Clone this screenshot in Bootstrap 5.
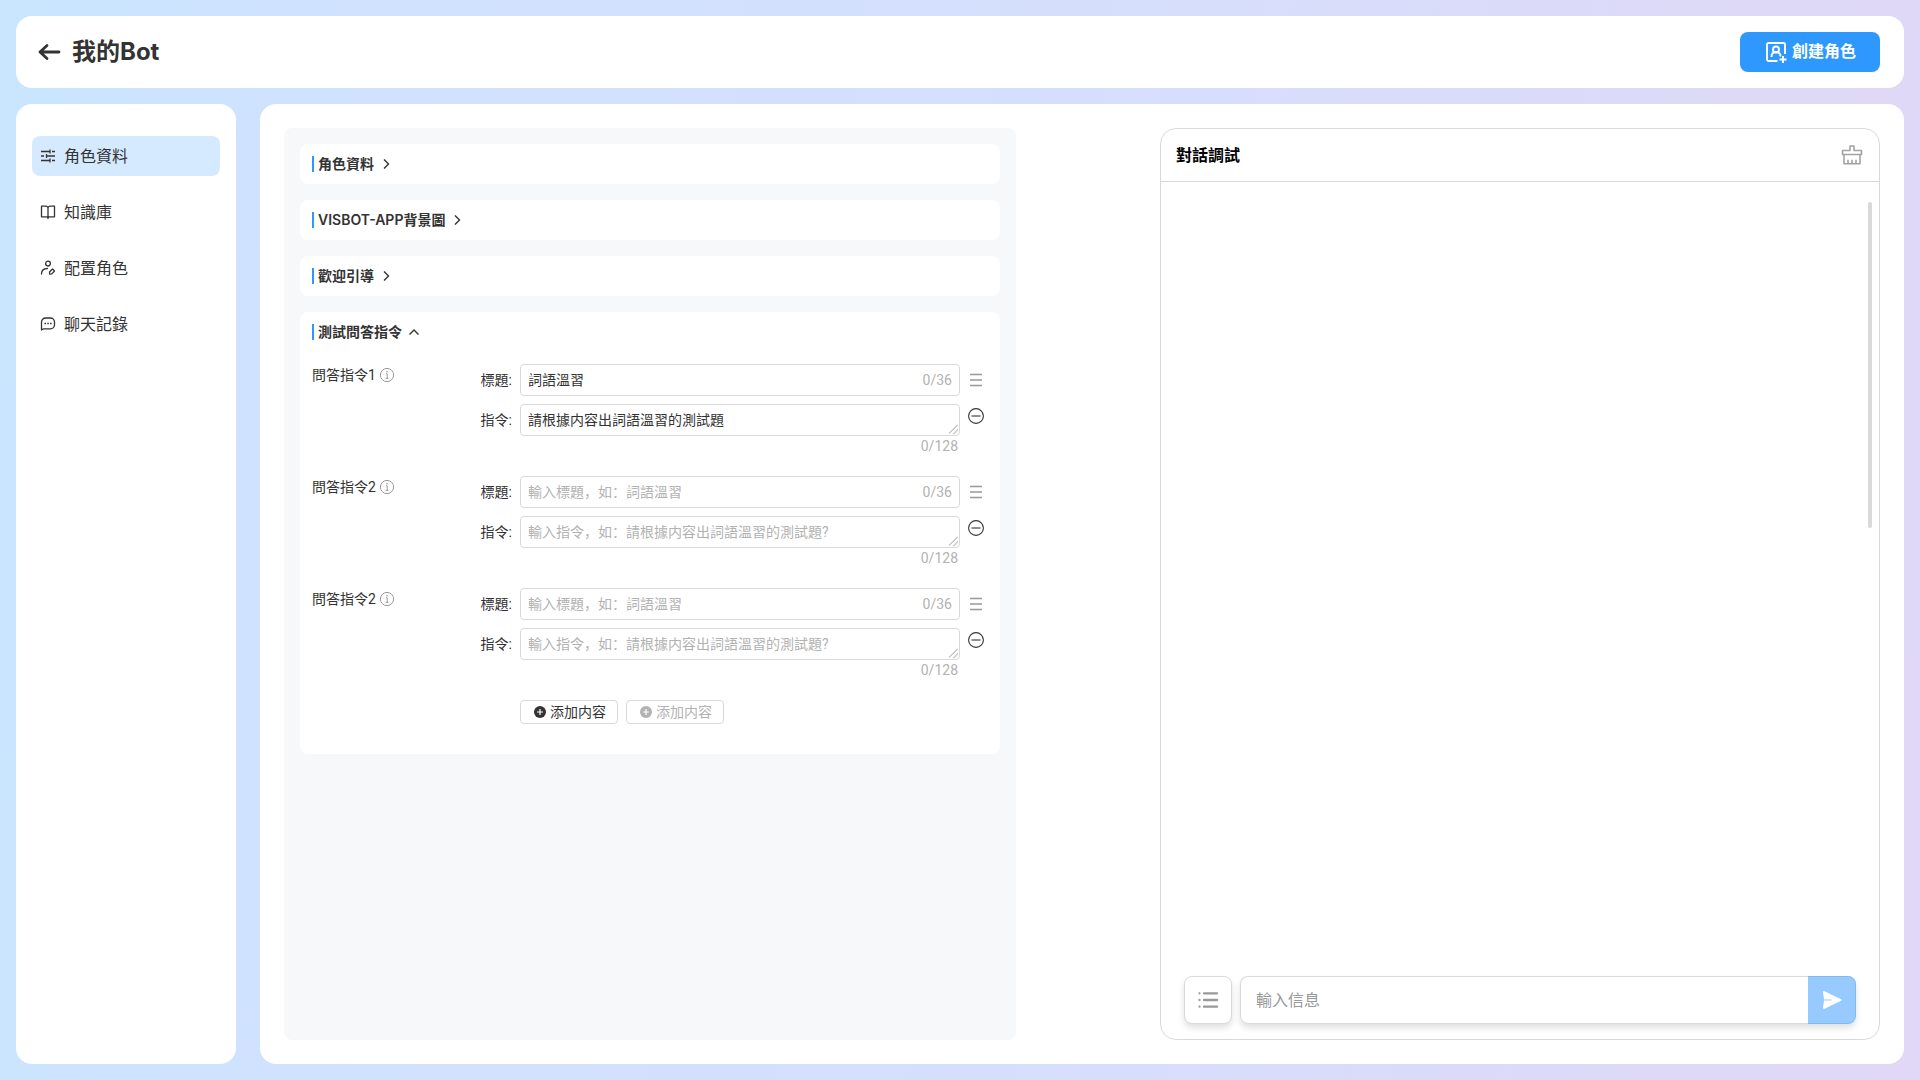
<!DOCTYPE html>
<html lang="zh-Hans">
<head>
<meta charset="utf-8">
<meta name="viewport" content="width=device-width, initial-scale=1">
<title>我的Bot</title>
<link href="https://cdn.jsdelivr.net/npm/bootstrap@5.3.0/dist/css/bootstrap.min.css" rel="stylesheet">
<style>
  :root { --ink: #333; --muted: #b2b2b2; --line: #d9d9d9; --blue: #2e98ff; }
  body { font-family: Roboto, "Noto Sans CJK SC", sans-serif; font-size: 14px; line-height: 20px; color: var(--ink);
    background: linear-gradient(95deg, #c9e6ff 0%, #cfe2ff 15%, #d5dffc 54%, #dddaf8 84%, #e0d8f6 100%); }
  svg { flex: none; display: block; }
  .heading-face { font-family: Inter, "Noto Sans CJK SC", sans-serif; font-weight: 700; }
  .shell { min-height: 100vh; }
  .panel { background: #fff; border-radius: 16px; }
  .topbar { height: 72px; padding: 0 24px 0 20px; }
  .topbar h1 { font-size: 24px; line-height: 32px; }
  .create-btn { height: 40px; width: 140px; border-radius: 8px; background: var(--blue); color: #fff; font-size: 16px; font-weight: 700; }
  .side { width: 220px; padding: 32px 16px; gap: 16px; }
  .side-link { height: 40px; padding: 0 8px; gap: 8px; border-radius: 8px; color: var(--ink); font-size: 16px; line-height: 24px; text-decoration: none; }
  .side-link span { padding-top: 1px; }
  .side-link.active { background: #d5eaff; }
  .workspace { padding: 24px; gap: 144px; }
  .editor { flex: 1 1 732px; background: #f7f8fa; border-radius: 8px; padding: 16px; gap: 16px; }
  .section-box { background: #fff; border-radius: 8px; padding: 0 12px; }
  .section-toggle { height: 40px; gap: 4px; color: var(--ink); }
  .section-toggle h2 { font-size: 14px; line-height: 16px; font-weight: 600; border-left: 2px solid var(--blue); padding-left: 4px; }
  .qa-list { padding: 12px 4px 0 0; gap: 20px; }
  .qa-name { width: 168px; flex: none; gap: 3px; padding-top: 1px; }
  .qa-grid { gap: 8px; }
  .field-row { gap: 8px; }
  .field-tag { width: 32px; text-align: right; white-space: nowrap; }
  .field { border: 1px solid var(--line); border-radius: 4px; background: #fff; height: 32px; padding: 5px 7px; font-size: 14px; line-height: 20px; color: var(--ink); }
  .field:focus, .field:focus-within, .msg-box:focus { border-color: var(--blue); box-shadow: none; }
  .field input { border: 0; outline: 0; padding: 0; background: none; color: inherit; line-height: 20px; min-width: 0; }
  .field::placeholder, .field input::placeholder { color: var(--muted); opacity: 1; }
  textarea.field { resize: vertical; min-height: 32px; overflow: hidden; display: block; }
  textarea.field::-webkit-resizer { background: linear-gradient(135deg, transparent 44%, #ccc 44% 53%, transparent 53% 70%, #ccc 70% 79%, transparent 79%) right 1px bottom 1px / 9px 9px no-repeat; }
  .counter { color: var(--muted); }
  .total { padding: 0 26px 0 0; text-align: right; }
  .icon-btn { border: 0; background: none; padding: 0; width: 16px; display: flex; justify-content: center; }
  .add-row { padding: 20px 0 30px 208px; gap: 8px; }
  .add-btn { height: 24px; width: 98px; padding: 0 0 0 2px; gap: 4px; border: 1px solid var(--line); border-radius: 4px; background: #fff; color: var(--ink); font-size: 14px; }
  .add-btn:disabled { color: var(--muted); }
  .chat { flex: 1 1 720px; border: 1px solid var(--line); border-radius: 16px; }
  .chat-head { height: 53px; padding: 0 15px; border-bottom: 1px solid var(--line); color: #000; }
  .chat-head h2 { font-size: 16px; line-height: 24px; font-weight: 700; padding-top: 1px; }
  .chat-log { padding: 20px 7px; }
  .scroll-thumb { width: 4px; height: 326px; border-radius: 2px; background: #d9d9d9; }
  .composer { padding: 0 23px 15px; gap: 8px; }
  .tool-btn { width: 48px; height: 48px; border: 1px solid var(--line); border-radius: 8px; background: #fff; box-shadow: 0 4px 6px rgba(0,0,0,.12); }
  .msg-group { border-radius: 8px; box-shadow: 0 4px 6px rgba(0,0,0,.12); }
  .msg-box { height: 48px; border: 1px solid var(--line); border-right: 0; border-radius: 8px 0 0 8px; padding: 0 15px; font-size: 16px; }
  .msg-box::placeholder { color: #999; opacity: 1; }
  .send-btn { width: 48px; height: 48px; border: 1px solid #80bbf0; border-left: 0; border-radius: 0 8px 8px 0; background: #97cbff; }
</style>
</head>
<body>
<svg width="0" height="0" class="position-absolute" aria-hidden="true">
  <symbol id="i-right" viewBox="0 0 16 16"><path d="M6 3.500 10.500 8 6 12.500" fill="none" stroke="currentColor" stroke-width="1.400"/></symbol>
  <symbol id="i-up" viewBox="0 0 16 16"><path d="M3.500 10.500 8 6l4.500 4.500" fill="none" stroke="currentColor" stroke-width="1.400"/></symbol>
  <symbol id="i-info" viewBox="0 0 16 16"><g fill="none" stroke="#999"><circle cx="8" cy="8" r="6.600"/><path d="M7 6.800h1.200V11.500M6.800 11.500h2.600"/></g><circle cx="8" cy="4.800" r=".8" fill="#999"/></symbol>
  <symbol id="i-drag" viewBox="0 0 16 16"><path d="M2 2.500h12M2 8h12M2 13.500h12" stroke="#999" stroke-width="1.300"/></symbol>
  <symbol id="i-minus" viewBox="0 0 16 16"><g fill="none" stroke="#333" stroke-width="1.100"><circle cx="8" cy="8" r="7.400"/><path d="M3.500 8h9"/></g></symbol>
  <symbol id="i-plus" viewBox="0 0 12 12"><circle cx="6" cy="6" r="6" fill="currentColor"/><path d="M6 3v6M3 6h6" stroke="#fff" stroke-width="1.200"/></symbol>
</svg>

<div class="shell d-flex flex-column p-3 gap-3">
  <header class="panel topbar d-flex align-items-center justify-content-between">
    <div class="d-flex align-items-center gap-2">
      <a href="#" aria-label="返回"><svg width="28" height="24" viewBox="0 0 28 24" fill="none" stroke="#333" stroke-width="2.800" stroke-linecap="round" stroke-linejoin="round"><path d="M23 12H4M11 5.500 4 12l7 6.500"/></svg></a>
      <h1 class="heading-face m-0">我的Bot</h1>
    </div>
    <button type="button" class="btn create-btn d-flex align-items-center justify-content-center p-0 gap-1">
      <svg width="24" height="24" viewBox="0 0 24 24" fill="none" stroke="#fff" stroke-width="1.900"><path d="M13.500 21H4.500A1.500 1.500 0 0 1 3 19.500v-15A1.500 1.500 0 0 1 4.500 3h15A1.500 1.500 0 0 1 21 4.500V14M19 16v7M15.500 19.500h7"/><circle cx="12" cy="9.500" r="3"/><path d="M7.500 17c0-3 1.600-5 4.500-5s4.500 2 4.500 4.500"/></svg>
      創建角色
    </button>
  </header>

  <div class="d-flex flex-grow-1 gap-4">
    <nav class="panel side d-flex flex-column flex-shrink-0" aria-label="主選單">
      <a href="#" class="side-link active d-flex align-items-center" aria-current="page">
        <svg width="16" height="16" viewBox="0 0 16 16" stroke="#333" stroke-width="1.300" fill="none"><path d="M1 3.500h8.500M12 3.500h3M10 1.500v4M1 8h3M6.500 8H15M6.500 6v4M1 12.500h8.500M12 12.500h3M10 10.500v4"/></svg><span>角色資料</span></a>
      <a href="#" class="side-link d-flex align-items-center">
        <svg width="16" height="16" viewBox="0 0 16 16" stroke="#333" stroke-width="1.300" fill="none" stroke-linejoin="round"><path d="M8 3.800C7.500 2.700 7 2.200 6 2.200H1.500v10.600H6.500c.8 0 1.500.3 1.500 1.700 0-1.400.7-1.700 1.500-1.700h5V2.200H10C9 2.200 8.500 2.700 8 3.800V14"/></svg><span>知識庫</span></a>
      <a href="#" class="side-link d-flex align-items-center">
        <svg width="16" height="16" viewBox="0 0 16 16" stroke="#333" stroke-width="1.300" fill="none" stroke-linecap="round" stroke-linejoin="round"><circle cx="8" cy="3.600" r="2.400"/><path d="M1.500 14c0-3.500 2.500-5.500 6-5.500M9.700 14.200l-.2-2.200 3-3 2 2-2.700 2.900z"/></svg><span>配置角色</span></a>
      <a href="#" class="side-link d-flex align-items-center">
        <svg width="16" height="16" viewBox="0 0 16 16" stroke="#333" stroke-width="1.300" fill="none" stroke-linejoin="round"><path d="M1.500 14V6A4 4 0 0 1 5.500 2h5a4 4 0 0 1 4 4v2.800a4 4 0 0 1-4 4H3.500z"/><path d="M4.500 7.500H6M7.300 7.500h1.500M10.100 7.500h1.500" stroke-width="1.500"/></svg><span>聊天記錄</span></a>
    </nav>

    <main class="panel workspace d-flex flex-grow-1">
      <div class="editor d-flex flex-column">
        <section class="section-box"><button type="button" class="btn section-toggle d-flex align-items-center p-0 border-0" aria-expanded="false"><h2 class="heading-face m-0">角色資料</h2><svg width="16" height="16"><use href="#i-right"/></svg></button></section>
        <section class="section-box"><button type="button" class="btn section-toggle d-flex align-items-center p-0 border-0" aria-expanded="false"><h2 class="heading-face m-0">VISBOT-APP背景圖</h2><svg width="16" height="16"><use href="#i-right"/></svg></button></section>
        <section class="section-box"><button type="button" class="btn section-toggle d-flex align-items-center p-0 border-0" aria-expanded="false"><h2 class="heading-face m-0">歡迎引導</h2><svg width="16" height="16"><use href="#i-right"/></svg></button></section>
        <section class="section-box">
          <button type="button" class="btn section-toggle d-flex align-items-center p-0 border-0" aria-expanded="true"><h2 class="heading-face m-0">測試問答指令</h2><svg width="16" height="16"><use href="#i-up"/></svg></button>
          <div class="qa-list d-flex flex-column">
            <div class="d-flex">
              <div class="qa-name d-flex align-items-center align-self-start">問答指令1<svg width="16" height="16"><use href="#i-info"/></svg></div>
              <div class="flex-grow-1">
                <div class="qa-grid d-flex flex-column">
                  <div class="field-row d-flex align-items-center"><label class="field-tag" for="t1">標題:</label><div class="field d-flex flex-grow-1"><input id="t1" class="flex-grow-1" type="text" value="詞語溫習" placeholder="輸入標題，如：詞語溫習"><span class="counter">0/36</span></div><button type="button" class="icon-btn" aria-label="排序"><svg width="16" height="16"><use href="#i-drag"/></svg></button></div>
                  <div class="field-row d-flex"><label class="field-tag align-self-center" for="c1">指令:</label><textarea id="c1" class="field flex-grow-1" rows="1" placeholder="輸入指令，如：請根據内容出詞語溫習的測試題?">請根據内容出詞語溫習的測試題</textarea><button type="button" class="icon-btn pt-1" aria-label="刪除"><svg width="16" height="16"><use href="#i-minus"/></svg></button></div>
                </div>
                <div class="total counter">0/128</div>
              </div>
            </div>
            <div class="d-flex">
              <div class="qa-name d-flex align-items-center align-self-start">問答指令2<svg width="16" height="16"><use href="#i-info"/></svg></div>
              <div class="flex-grow-1">
                <div class="qa-grid d-flex flex-column">
                  <div class="field-row d-flex align-items-center"><label class="field-tag" for="t2">標題:</label><div class="field d-flex flex-grow-1"><input id="t2" class="flex-grow-1" type="text" placeholder="輸入標題，如：詞語溫習"><span class="counter">0/36</span></div><button type="button" class="icon-btn" aria-label="排序"><svg width="16" height="16"><use href="#i-drag"/></svg></button></div>
                  <div class="field-row d-flex"><label class="field-tag align-self-center" for="c2">指令:</label><textarea id="c2" class="field flex-grow-1" rows="1" placeholder="輸入指令，如：請根據内容出詞語溫習的測試題?"></textarea><button type="button" class="icon-btn pt-1" aria-label="刪除"><svg width="16" height="16"><use href="#i-minus"/></svg></button></div>
                </div>
                <div class="total counter">0/128</div>
              </div>
            </div>
            <div class="d-flex">
              <div class="qa-name d-flex align-items-center align-self-start">問答指令2<svg width="16" height="16"><use href="#i-info"/></svg></div>
              <div class="flex-grow-1">
                <div class="qa-grid d-flex flex-column">
                  <div class="field-row d-flex align-items-center"><label class="field-tag" for="t3">標題:</label><div class="field d-flex flex-grow-1"><input id="t3" class="flex-grow-1" type="text" placeholder="輸入標題，如：詞語溫習"><span class="counter">0/36</span></div><button type="button" class="icon-btn" aria-label="排序"><svg width="16" height="16"><use href="#i-drag"/></svg></button></div>
                  <div class="field-row d-flex"><label class="field-tag align-self-center" for="c3">指令:</label><textarea id="c3" class="field flex-grow-1" rows="1" placeholder="輸入指令，如：請根據内容出詞語溫習的測試題?"></textarea><button type="button" class="icon-btn pt-1" aria-label="刪除"><svg width="16" height="16"><use href="#i-minus"/></svg></button></div>
                </div>
                <div class="total counter">0/128</div>
              </div>
            </div>
          </div>
          <div class="add-row d-flex">
            <button type="button" class="add-btn d-flex align-items-center justify-content-center"><svg width="12" height="12"><use href="#i-plus"/></svg>添加内容</button>
            <button type="button" class="add-btn d-flex align-items-center justify-content-center" disabled><svg width="12" height="12"><use href="#i-plus"/></svg>添加内容</button>
          </div>
        </section>
      </div>

      <section class="chat d-flex flex-column">
        <div class="chat-head d-flex align-items-center justify-content-between">
          <h2 class="m-0">對話調試</h2>
          <button type="button" class="btn p-0 border-0" aria-label="清空對話"><svg width="24" height="24" viewBox="0 0 24 24" fill="none" stroke="#a3a3a3" stroke-width="1.600" stroke-linejoin="round"><path d="M2.500 7.500h7.500V3h4v4.500h7.500v4h-19zM4 11.500v9.300h16v-9.300M8 20.800v-4M12 20.800v-4M16 20.800v-4"/></svg></button>
        </div>
        <div class="chat-log flex-grow-1 d-flex justify-content-end"><div class="scroll-thumb"></div></div>
        <form class="composer d-flex">
          <button type="button" class="tool-btn d-flex align-items-center justify-content-center p-0" aria-label="指令列表"><svg width="24" height="24" viewBox="0 0 24 24" stroke="#999" stroke-width="2.300" stroke-linecap="round"><path d="M8 5.300h13M8 12h13M8 18.700h13M3.500 5.300h.01M3.500 12h.01M3.500 18.700h.01"/></svg></button>
          <div class="msg-group d-flex flex-grow-1">
            <input type="text" class="form-control msg-box" aria-label="輸入信息" placeholder="輸入信息">
            <button type="submit" class="send-btn d-flex flex-shrink-0 align-items-center justify-content-center p-0" aria-label="發送"><svg width="24" height="24" viewBox="0 0 24 24"><path d="M3 4.200c0-1 .8-1.400 1.600-1L21 11.200c.8.400.8 1.200 0 1.600L4.600 20.800c-.8.400-1.600 0-1.600-1L4 12.600h7.500v-1.200H4z" fill="#fff"/></svg></button>
          </div>
        </form>
      </section>
    </main>
  </div>
</div>
<script src="https://cdn.jsdelivr.net/npm/bootstrap@5.3.0/dist/js/bootstrap.bundle.min.js"></script>
</body>
</html>
